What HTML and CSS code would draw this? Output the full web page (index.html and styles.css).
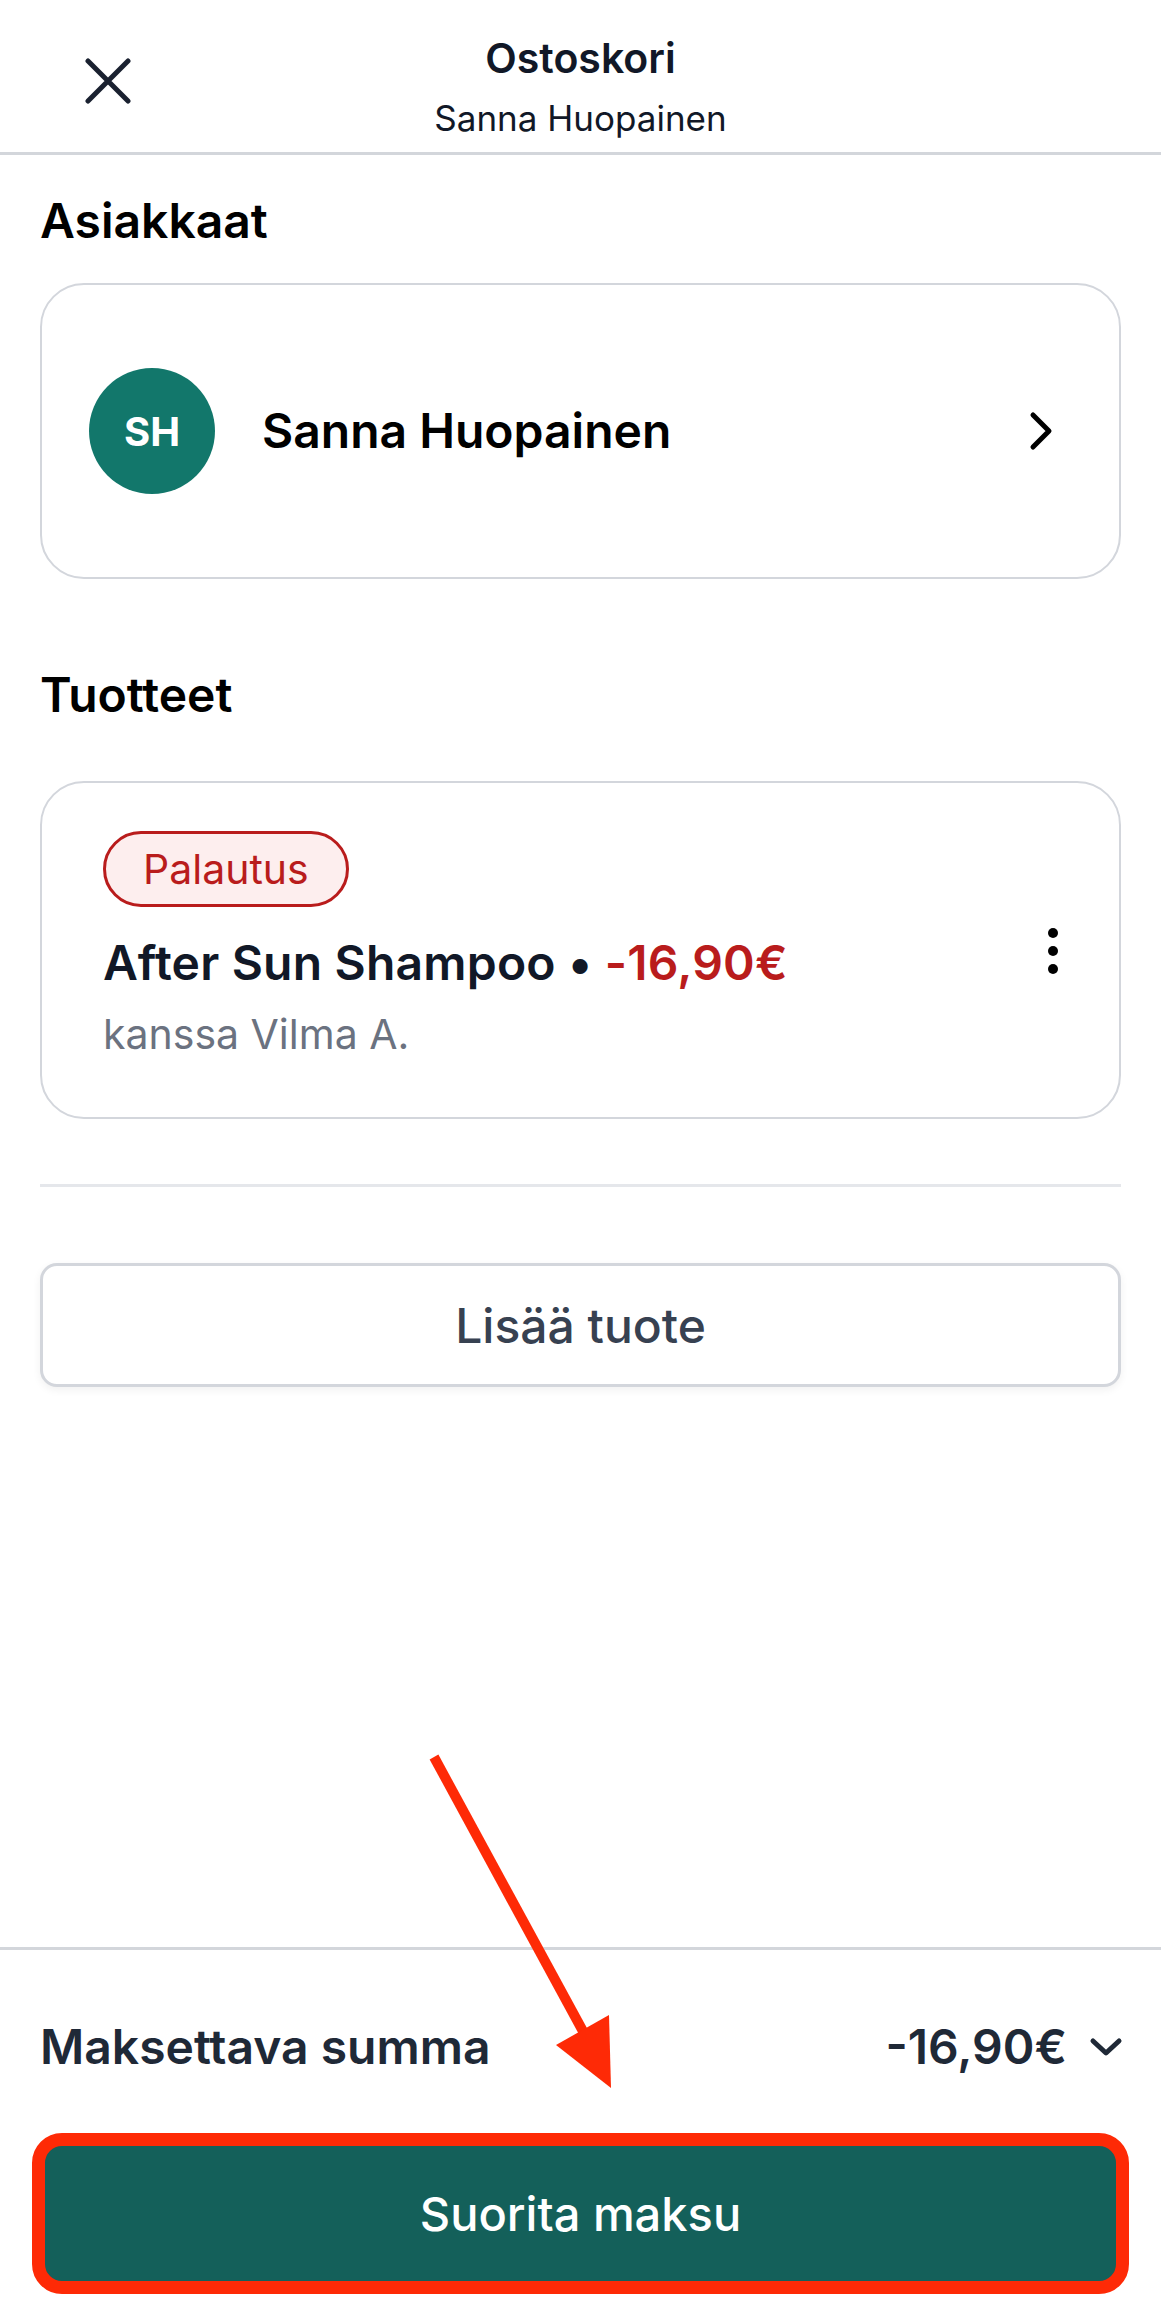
FILE: index.html
```html
<!DOCTYPE html>
<html lang="fi">
<head>
<meta charset="utf-8">
<title>Ostoskori</title>
<link rel="stylesheet" href="styles.css">
</head>
<body>
<div class="app">
  <header class="topbar">
    <button class="close-btn" aria-label="Sulje">
      <svg width="46" height="46" viewBox="0 0 46 46"><path d="M3 3 L43 43 M43 3 L3 43" fill="none" stroke="#1a2130" stroke-width="5" stroke-linecap="round"/></svg>
    </button>
    <div class="title-block">
      <div class="title">Ostoskori</div>
      <div class="subtitle">Sanna Huopainen</div>
    </div>
    <div class="spacer"></div>
  </header>

  <main class="content">
    <h2 class="section-title first">Asiakkaat</h2>
    <div class="card customer">
      <div class="avatar">SH</div>
      <div class="customer-name">Sanna Huopainen</div>
      <svg class="chevron-right" width="24" height="40" viewBox="0 0 24 40"><path d="M4 4 L20 20 L4 36" fill="none" stroke="#000" stroke-width="5" stroke-linecap="round" stroke-linejoin="round"/></svg>
    </div>

    <h2 class="section-title second">Tuotteet</h2>
    <div class="card product">
      <div class="product-info">
        <span class="badge">Palautus</span>
        <div class="product-title">After Sun Shampoo <span class="sep">•</span> <span class="price">-16,90€</span></div>
        <div class="product-sub">kanssa Vilma A.</div>
      </div>
      <svg class="kebab" width="12" height="48" viewBox="0 0 12 48"><circle cx="6" cy="6" r="5"/><circle cx="6" cy="24" r="5"/><circle cx="6" cy="42" r="5"/></svg>
    </div>

    <hr class="divider">

    <button class="add-btn">Lisää tuote</button>
  </main>

  <footer class="checkout">
    <div class="total-row">
      <span class="total-label">Maksettava summa</span>
      <span class="total-amount">-16,90€
        <svg class="chevron-down" width="34" height="20" viewBox="0 0 34 20"><path d="M4 4 L17 16 L30 4" fill="none" stroke="#1f2937" stroke-width="5" stroke-linecap="round" stroke-linejoin="round"/></svg>
      </span>
    </div>
    <button class="pay-btn">Suorita maksu</button>
  </footer>

  <svg class="annotation" width="1161" height="2316" viewBox="0 0 1161 2316">
    <line x1="434" y1="1757" x2="585" y2="2035" stroke="#fe2a06" stroke-width="10"/>
    <polygon points="611,2088 556,2045 609,2015" fill="#fe2a06"/>
  </svg>
</div>
</body>
</html>
```

FILE: styles.css
```css
* {
  box-sizing: border-box;
}

html, body {
  margin: 0;
  padding: 0;
  background: #ffffff;
}

body {
  font-family: Inter, "Noto Sans", "Liberation Sans", sans-serif;
  color: #111827;
}

.app {
  position: relative;
  min-height: 100vh;
  display: flex;
  flex-direction: column;
}

/* Header */
.topbar {
  height: 155px;
  border-bottom: 3px solid #d3d6db;
  display: grid;
  grid-template-columns: 1fr auto 1fr;
  align-items: start;
  padding-top: 29px;
}

.close-btn {
  margin: 29px 0 0 85px;
  width: 46px;
  height: 46px;
  padding: 0;
  border: 0;
  background: none;
  justify-self: start;
}

.close-btn svg {
  display: block;
}

.title-block {
  text-align: center;
}

.title {
  font-size: 41px;
  line-height: 58px;
  font-weight: 600;
  color: #111827;
}

.subtitle {
  margin-top: 6px;
  font-size: 35px;
  line-height: 50px;
  font-weight: 400;
  color: #111827;
}

/* Content */
.content {
  flex: 1;
  display: flex;
  flex-direction: column;
  padding: 0 40px;
}

.section-title {
  margin: 0;
  font-size: 48px;
  line-height: 70px;
  font-weight: 600;
  color: #000000;
}

.section-title.first {
  margin-top: 31px;
  margin-bottom: 27px;
}

.section-title.second {
  margin-top: 81px;
  margin-bottom: 51px;
}

.card {
  border: 2px solid #d3d6dc;
  border-radius: 44px;
  background: #ffffff;
}

.customer {
  display: flex;
  align-items: center;
  padding: 83px 66px 83px 47px;
}

.avatar {
  width: 126px;
  height: 126px;
  border-radius: 50%;
  background: #12776b;
  color: #ffffff;
  font-size: 40px;
  font-weight: 700;
  display: flex;
  align-items: center;
  justify-content: center;
  flex-shrink: 0;
}

.customer-name {
  flex: 1;
  margin-left: 47px;
  font-size: 48px;
  line-height: 70px;
  font-weight: 600;
  color: #000000;
}

.chevron-right {
  display: block;
  flex-shrink: 0;
}

.product {
  display: flex;
  align-items: center;
  padding: 48px 60px 47px 61px;
}

.product-info {
  flex: 1;
  display: flex;
  flex-direction: column;
  align-items: flex-start;
}

.badge {
  display: inline-block;
  height: 76px;
  padding: 0 37px;
  border: 3px solid #b91c1c;
  border-radius: 40px;
  background: #fdeeee;
  color: #b91c1c;
  font-size: 41px;
  line-height: 70px;
  font-weight: 400;
}

.product-title {
  margin-top: 21px;
  font-size: 48px;
  line-height: 70px;
  font-weight: 600;
  letter-spacing: 0.2px;
  color: #111827;
}

.price {
  color: #b91c1c;
}

.product-sub {
  font-size: 41px;
  line-height: 72px;
  color: #6b7280;
}

.kebab {
  display: block;
  fill: #000000;
  flex-shrink: 0;
}

.divider {
  margin: 65px 0 0;
  border: 0;
  height: 3px;
  background: #e5e7eb;
}

.add-btn {
  margin-top: 76px;
  height: 124px;
  width: 100%;
  border: 3px solid #d3d6dc;
  border-radius: 17px;
  background: #ffffff;
  box-shadow: 0 3px 8px rgba(0, 0, 0, 0.06);
  font-family: inherit;
  font-size: 48px;
  font-weight: 500;
  color: #374151;
}

/* Footer */
.checkout {
  border-top: 3px solid #d3d6db;
  padding: 62px 40px 30px;
}

.total-row {
  display: flex;
  justify-content: space-between;
  align-items: center;
  height: 70px;
}

.total-label {
  font-size: 48px;
  line-height: 70px;
  font-weight: 600;
  color: #1f2937;
}

.total-amount {
  display: flex;
  align-items: center;
  gap: 22px;
  font-size: 48px;
  line-height: 70px;
  font-weight: 600;
  color: #1f2937;
}

.chevron-down {
  display: block;
  margin-right: -2px;
}

.pay-btn {
  display: block;
  margin-top: 59px;
  width: 100%;
  height: 145px;
  border: 0;
  border-radius: 22px;
  background: #14605a;
  color: #ffffff;
  font-family: inherit;
  font-size: 47px;
  font-weight: 500;
  outline: 13px solid #fe2a06;
  outline-offset: -5px;
}

/* Annotation overlay */
.annotation {
  position: absolute;
  left: 0;
  top: 0;
  pointer-events: none;
}
```
